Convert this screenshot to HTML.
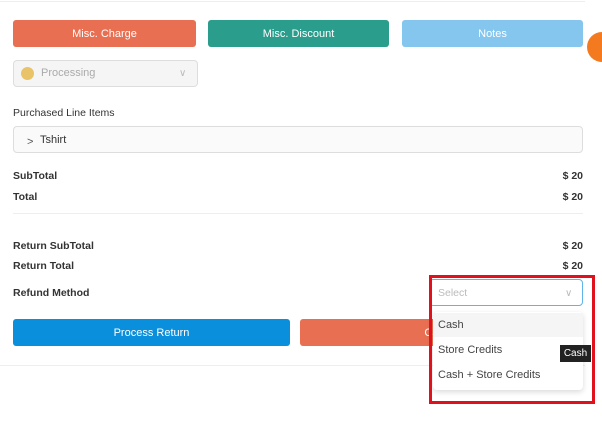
<!DOCTYPE html>
<html><head><style>
*{margin:0;padding:0;box-sizing:border-box}
body{width:602px;height:429px;background:#fff;font-family:"Liberation Sans",sans-serif;position:relative;overflow:hidden;color:#333}
.a{position:absolute}
.btn{position:absolute;border-radius:3px;color:#fff;font-size:11px;display:flex;align-items:center;justify-content:center}
.lbl{position:absolute;font-size:10.5px;font-weight:bold;color:#333}
.val{position:absolute;right:19px;font-size:10.5px;font-weight:bold;color:#333}
</style></head><body>
<div class="a" style="left:0;top:1px;width:585px;height:1px;background:#eee"></div>
<div class="btn" style="left:13px;top:20px;width:183px;height:27px;background:#e86f52">Misc. Charge</div>
<div class="btn" style="left:208px;top:20px;width:181px;height:27px;background:#2a9d8c">Misc. Discount</div>
<div class="btn" style="left:402px;top:20px;width:181px;height:27px;background:#85c6ef">Notes</div>
<div class="a" style="left:587px;top:32px;width:30px;height:30px;border-radius:50%;background:#f47a20"></div>
<div class="a" style="left:13px;top:60px;width:185px;height:27px;border:1px solid #ddd;border-radius:4px;background:#f5f5f5"></div>
<div class="a" style="left:21px;top:67px;width:13px;height:13px;border-radius:50%;background:#e8c36a"></div>
<div class="a" style="left:41px;top:67px;font-size:11px;color:#aaa">Processing</div>
<div class="a" style="left:179px;top:68px;font-size:10px;color:#bbb">&#8744;</div>
<div class="lbl" style="left:13px;top:107px;font-weight:normal;font-size:10.5px">Purchased Line Items</div>
<div class="a" style="left:13px;top:126px;width:570px;height:27px;border:1px solid #ddd;border-radius:4px;background:#fafafa"></div>
<div class="a" style="left:27px;top:136px;font-size:11px;color:#555">&gt;</div>
<div class="a" style="left:40px;top:134px;font-size:11px;color:#333">Tshirt</div>
<div class="lbl" style="left:13px;top:170px">SubTotal</div><div class="val" style="top:170px">$ 20</div>
<div class="lbl" style="left:13px;top:191px">Total</div><div class="val" style="top:191px">$ 20</div>
<div class="a" style="left:13px;top:213px;width:570px;height:1px;background:#eee"></div>
<div class="lbl" style="left:13px;top:240px">Return SubTotal</div><div class="val" style="top:240px">$ 20</div>
<div class="lbl" style="left:13px;top:260px">Return Total</div><div class="val" style="top:260px">$ 20</div>
<div class="lbl" style="left:13px;top:287px">Refund Method</div>
<div class="btn" style="left:13px;top:319px;width:277px;height:27px;background:#0a8fdc">Process Return</div>
<div class="btn" style="left:300px;top:319px;width:283px;height:27px;background:#e86f52">Cancel</div>
<div class="a" style="left:0;top:365px;width:585px;height:1px;background:#eee"></div>
<div class="a" style="left:429px;top:279px;width:154px;height:27px;border:1px solid #5fb4ea;border-radius:4px;background:#fff"></div>
<div class="a" style="left:438px;top:287px;font-size:10.5px;color:#bbb">Select</div>
<div class="a" style="left:565px;top:288px;font-size:10px;color:#bbb">&#8744;</div>
<div class="a" style="left:433px;top:312px;width:150px;height:78px;background:#fff;border-radius:4px;box-shadow:0 2px 6px rgba(0,0,0,.15)"></div>
<div class="a" style="left:433px;top:313px;width:150px;height:24px;background:#f5f5f5"></div>
<div class="a" style="left:438px;top:319px;font-size:11px;color:#444">Cash</div>
<div class="a" style="left:438px;top:344px;font-size:11px;color:#444">Store Credits</div>
<div class="a" style="left:438px;top:369px;font-size:11px;color:#444">Cash + Store Credits</div>
<div class="a" style="left:560px;top:345px;width:31px;height:17px;background:#222;color:#fff;font-size:10px;display:flex;align-items:center;justify-content:center">Cash</div>
<div class="a" style="left:429px;top:275px;width:166px;height:129px;border:3px solid #e0101c"></div>
</body></html>
